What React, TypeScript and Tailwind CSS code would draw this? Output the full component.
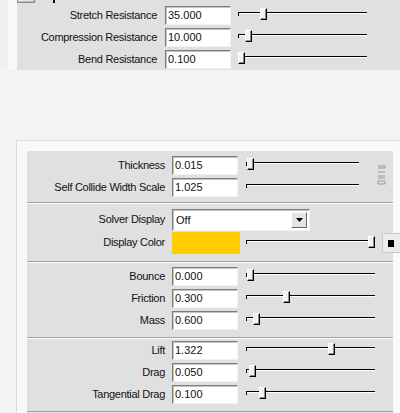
import React from "react";

function Field({ value }: { value: string }) {
  return (
    <div className="shrink-0 h-[19px] w-[66px] bg-white border border-t-[#7c7c7c] border-l-[#7c7c7c] border-r-[#f2f2f2] border-b-[#f2f2f2] shadow-[inset_1px_1px_0_#c4c4c4] pl-[2px] leading-[17px] text-[11px] text-[#111]">
      {value}
    </div>
  );
}

function Slider({ width, thumb }: { width: number; thumb?: number }) {
  return (
    <div className="relative shrink-0 h-[20px]" style={{ width }}>
      <div className="absolute left-0 right-0 top-[7px] h-px bg-black" />
      <div className="absolute left-0 right-0 top-[8px] h-px bg-white" />
      <div className="absolute left-0 top-[7px] w-px h-[4px] bg-black" />
      {thumb !== undefined && (
        <div
          className="absolute top-[3px] w-[7px] h-[12px] bg-[#f2f2f2] border border-l-white border-t-white border-r-black border-b-black shadow-[inset_-1px_-1px_0_#8a8a8a]"
          style={{ left: thumb }}
        />
      )}
    </div>
  );
}

function TopRow({ label, value, thumb }: { label: string; value: string; thumb: number }) {
  return (
    <div className="flex items-center h-[22px]">
      <div className="shrink-0 w-[140px] text-right whitespace-nowrap tracking-[-0.28px]">{label}</div>
      <div className="shrink-0 ml-[8px]">
        <Field value={value} />
      </div>
      <div className="shrink-0 ml-[7px]">
        <Slider width={129} thumb={thumb} />
      </div>
    </div>
  );
}

function Row({
  label,
  value,
  thumb,
  width = 129,
}: {
  label: string;
  value: string;
  thumb?: number;
  width?: number;
}) {
  return (
    <div className="flex items-center h-[22px]">
      <div className="shrink-0 w-[138px] text-right whitespace-nowrap tracking-[-0.28px]">{label}</div>
      <div className="shrink-0 ml-[7px]">
        <Field value={value} />
      </div>
      <div className="shrink-0 ml-[8px]">
        <Slider width={width} thumb={thumb} />
      </div>
    </div>
  );
}

export default function App() {
  return (
    <div className="relative w-[400px] h-[413px] overflow-hidden bg-[#f3f3f3] text-[11px] text-[#111] font-[family-name:'Liberation_Sans',Arial,sans-serif]">
      {/* Top panel */}
      <div className="flex h-[70px]">
        <div className="w-[8px] bg-[#f0f0f0]" />
        <div className="w-[9px] bg-[#f8f8f8]" />
        <div className="relative flex-1 bg-[#e0e0e0] pt-[4px]">
          <div className="absolute -top-[14px] left-0 w-[18px] h-[17px] border border-[#8c8c8c] bg-[#e6e6e6] shadow-[inset_-1px_-1px_0_#bcbcbc]" />
          <div className="absolute top-0 left-[36px] w-[2px] h-[3px] bg-black" />
          <TopRow label="Stretch Resistance" value="35.000" thumb={22} />
          <TopRow label="Compression Resistance" value="10.000" thumb={7} />
          <TopRow label="Bend Resistance" value="0.100" thumb={0} />
        </div>
      </div>

      {/* Lower frame */}
      <div className="ml-[16px] mt-[70px] h-[300px] border-l border-t border-[#dadada] bg-[#f9f9f9] pl-[10px] pt-[10px]">
        <div className="w-[366px] bg-[#e0e0e0] h-[300px]">
          {/* Section 1 */}
          <div className="pt-[3px] pb-[4px] border-b border-[#a0a0a0]">
            <div className="flex">
              <div>
                <Row label="Thickness" value="0.015" thumb={1} width={113} />
                <Row label="Self Collide Width Scale" value="1.025" width={113} />
              </div>
              <div className="shrink-0 ml-[18px] mt-[10px]">
                <svg width="10" height="22" viewBox="0 0 10 22">
                  <g stroke="#9a9a9a" strokeWidth="1" fill="none">
                    <path d="M1 2 H8 V4 H1" />
                    <path d="M1 8 H8" />
                    <path d="M1 12 H8 M1 14 H8" />
                    <path d="M1 17 H8 V20 H1 Z" />
                  </g>
                </svg>
              </div>
            </div>
          </div>

          {/* Section 2 */}
          <div className="border-t border-white pt-[4px] pb-[7px] border-b border-b-[#a0a0a0]">
            <div className="flex items-center h-[23px]">
              <div className="shrink-0 w-[138px] text-right whitespace-nowrap tracking-[-0.28px]">Solver Display</div>
              <div className="shrink-0 ml-[7px] relative h-[22px] w-[138px] bg-white border border-t-[#7c7c7c] border-l-[#7c7c7c] border-r-[#f2f2f2] border-b-[#f2f2f2] shadow-[inset_1px_1px_0_#c4c4c4] pl-[3px] leading-[20px]">
                Off
                <div className="absolute right-[2px] top-[2px] w-[16px] h-[16px] bg-[#e4e4e4] border border-l-white border-t-white border-r-[#6a6a6a] border-b-[#6a6a6a] flex items-center justify-center">
                  <svg width="7" height="4" viewBox="0 0 7 4">
                    <path d="M0 0 H7 L3.5 4 Z" fill="#000" />
                  </svg>
                </div>
              </div>
            </div>
            <div className="flex items-center h-[23px]">
              <div className="shrink-0 w-[138px] text-right whitespace-nowrap tracking-[-0.28px]">Display Color</div>
              <div className="shrink-0 ml-[7px] h-[22px] w-[68px] bg-[#ffcc00]" />
              <div className="shrink-0 ml-[6px]">
                <Slider width={127} thumb={122} />
              </div>
              <div className="shrink-0 ml-[9px] relative h-[20px] w-[22px] border border-[#c8c8c8] bg-[#ececec]">
                <div className="absolute left-[5px] top-[6px] w-[6px] h-[7px] bg-black" />
              </div>
            </div>
          </div>

          {/* Section 3 */}
          <div className="border-t border-white pt-[2px] pb-[6px] border-b border-b-[#a0a0a0]">
            <Row label="Bounce" value="0.000" thumb={1} />
            <Row label="Friction" value="0.300" thumb={37} />
            <Row label="Mass" value="0.600" thumb={7} />
          </div>

          {/* Section 4 */}
          <div className="border-t border-white pt-0 pb-[6px] border-b border-b-[#a0a0a0]">
            <Row label="Lift" value="1.322" thumb={82} />
            <Row label="Drag" value="0.050" thumb={3} />
            <Row label="Tangential Drag" value="0.100" thumb={13} />
          </div>
        </div>
      </div>
    </div>
  );
}
